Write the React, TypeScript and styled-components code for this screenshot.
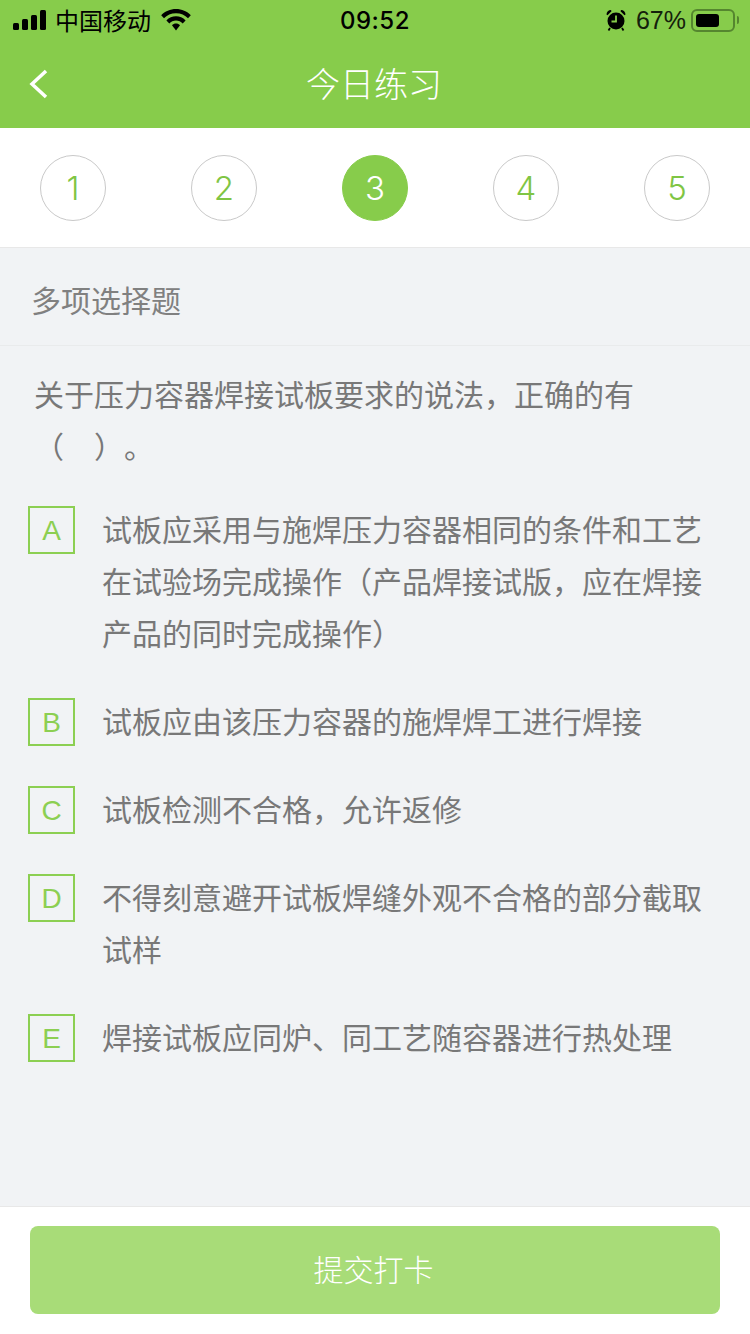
import { createGlobalStyle } from "styled-components";
import styled from "styled-components";

const GREEN = "#87cc4b";

const steps = [1, 2, 3, 4, 5];

const options = [
  {
    key: "A",
    text: "试板应采用与施焊压力容器相同的条件和工艺在试验场完成操作（产品焊接试版，应在焊接产品的同时完成操作）",
  },
  { key: "B", text: "试板应由该压力容器的施焊焊工进行焊接" },
  { key: "C", text: "试板检测不合格，允许返修" },
  { key: "D", text: "不得刻意避开试板焊缝外观不合格的部分截取试样" },
  { key: "E", text: "焊接试板应同炉、同工艺随容器进行热处理" },
];

const App: React.FunctionComponent = () => {
  return (
    <Page>
      <GlobalStyle />
      <Header>
        <StatusBar>
          <StatusLeft>
            <svg width="36" height="20" viewBox="0 0 36 20" fill="#000">
              <rect x="0" y="13" width="6" height="7" rx="1.5" />
              <rect x="9" y="9" width="6" height="11" rx="1.5" />
              <rect x="18" y="5" width="6" height="15" rx="1.5" />
              <rect x="27" y="0" width="6" height="20" rx="1.5" />
            </svg>
            <Carrier>中国移动</Carrier>
            <WifiIcon width="30" height="22" viewBox="0 0 30 22" fill="#000">
              <path d="M15 0C9.200 0 4 2.300 0.200 6.200L3 9.300C5.900 6.200 10.200 4.300 15 4.300S24.100 6.200 27 9.300L29.800 6.200C26 2.300 20.800 0 15 0Z" />
              <path d="M15 7.300C11.300 7.300 8 8.800 5.400 11.400L8.300 14.500C10 12.700 12.400 11.600 15 11.600S20 12.700 21.700 14.500L24.600 11.400C22 8.800 18.700 7.300 15 7.300Z" />
              <path d="M15 14.500C13.500 14.500 12 15.100 11 16.200L15 21.500L19 16.200C18 15.100 16.500 14.500 15 14.500Z" />
            </WifiIcon>
          </StatusLeft>
          <Clock>09:52</Clock>
          <StatusRight>
            <svg width="20" height="22" viewBox="0 0 20 22" fill="#000">
              <circle cx="10" cy="12" r="8.500" />
              <path d="M0.500 5.500C0.500 2.800 2.500 1 5 1L5.500 2.200L1.500 6.200ZM19.500 5.500C19.500 2.800 17.500 1 15 1L14.500 2.200L18.500 6.200Z" />
              <path d="M4 19L2.500 21.500M16 19L17.500 21.500" stroke="#000" strokeWidth="1.800" />
              <path d="M10 6.500V12.500H5.500" fill="none" stroke={GREEN} strokeWidth="1.800" />
            </svg>
            <Percent>67%</Percent>
            <Battery>
              <BatteryLevel />
            </Battery>
            <BatteryCap />
          </StatusRight>
        </StatusBar>
        <NavBar>
          <BackIcon width="20" height="32" viewBox="0 0 20 32">
            <path d="M17 3L3 16L17 29" fill="none" stroke="#fff" strokeWidth="3.500" />
          </BackIcon>
          <Title>今日练习</Title>
        </NavBar>
      </Header>

      <Steps>
        {steps.map((n) => (
          <Step key={n} $active={n === 3}>
            {n}
          </Step>
        ))}
      </Steps>

      <Body>
        <SectionTitle>多项选择题</SectionTitle>
        <Question>
          关于压力容器焊接试板要求的说法，正确的有
          <br />
          （　）。
        </Question>
        <OptionList>
          {options.map((o) => (
            <Option key={o.key}>
              <OptionKey>{o.key}</OptionKey>
              <OptionText>{o.text}</OptionText>
            </Option>
          ))}
        </OptionList>
      </Body>

      <Footer>
        <SubmitButton>提交打卡</SubmitButton>
      </Footer>
    </Page>
  );
};

const GlobalStyle = createGlobalStyle`
  * {
    box-sizing: border-box;
  }
  body {
    margin: 0;
    background: #fff;
    font-family: "Liberation Sans", "Noto Sans CJK SC", sans-serif;
  }
`;

const Page = styled.div`
  width: 750px;
  height: 1334px;
  display: flex;
  flex-direction: column;
  overflow: hidden;
`;

const Header = styled.header`
  height: 128px;
  background: ${GREEN};
`;

const StatusBar = styled.div`
  height: 40px;
  padding: 0 9px 0 13px;
  display: grid;
  grid-template-columns: 1fr auto 1fr;
  align-items: center;
  color: #000;
  font-size: 24px;
`;

const StatusLeft = styled.div`
  display: flex;
  align-items: center;
  gap: 6px;
`;

const WifiIcon = styled.svg`
  margin-left: 4px;
`;

const Carrier = styled.span`
  font-family: "Noto Sans CJK SC", sans-serif;
  line-height: 40px;
`;

const Clock = styled.span`
  margin-right: 4px;
  font-family: "Inter", sans-serif;
  font-weight: 500;
  letter-spacing: 0.5px;
`;

const StatusRight = styled.div`
  display: flex;
  align-items: center;
  justify-content: flex-end;
`;

const Percent = styled.span`
  margin: 0 5px 0 10px;
  font-size: 25px;
  color: #14200b;
`;

const Battery = styled.div`
  width: 44px;
  height: 23px;
  padding: 3px;
  border: 2px solid #55862f;
  border-radius: 6px;
`;

const BatteryLevel = styled.div`
  width: 67%;
  height: 100%;
  background: #000;
  border-radius: 3px;
`;

const BatteryCap = styled.div`
  width: 2px;
  height: 8px;
  margin: 0 2px;
  background: #55862f;
  border-radius: 0 2px 2px 0;
`;

const NavBar = styled.div`
  position: relative;
  height: 88px;
  display: flex;
  align-items: center;
  justify-content: center;
`;

const BackIcon = styled.svg`
  position: absolute;
  left: 29px;
  top: 28px;
`;

const Title = styled.h1`
  margin: 0 2px 0 0;
  padding-bottom: 4px;
  font-family: "Noto Sans CJK SC", sans-serif;
  font-size: 34px;
  font-weight: 300;
  color: #fff;
`;

const Steps = styled.div`
  height: 120px;
  padding: 0 40px;
  display: flex;
  align-items: center;
  justify-content: space-between;
  background: #fff;
  border-bottom: 1px solid #e8e8e8;
`;

const Step = styled.div<{ $active: boolean }>`
  width: 66px;
  height: 66px;
  display: flex;
  align-items: center;
  justify-content: center;
  border-radius: 50%;
  border: 1px solid ${(props) => (props.$active ? GREEN : "#c9c9c9")};
  background: ${(props) => (props.$active ? GREEN : "#fff")};
  color: ${(props) => (props.$active ? "#fff" : "#7fc544")};
  font-family: "Inter", sans-serif;
  font-size: 33px;
  font-weight: 350;
`;

const Body = styled.main`
  flex: 1;
  background: #f1f3f5;
`;

const SectionTitle = styled.h2`
  height: 98px;
  margin: 0;
  padding: 4px 0 0 31px;
  display: flex;
  align-items: center;
  border-bottom: 1px solid #e9ebec;
  font-family: "Noto Sans CJK SC", sans-serif;
  font-size: 30px;
  font-weight: 400;
  color: #808080;
`;

const Question = styled.p`
  margin: 0;
  padding: 21px 34px 31px;
  font-family: "Noto Sans CJK SC", sans-serif;
  font-size: 30px;
  font-weight: 400;
  line-height: 52px;
  color: #787878;
  text-spacing-trim: space-all;
`;

const OptionList = styled.ul`
  margin: 0;
  padding: 0 30px 0 28px;
  list-style: none;
  display: flex;
  flex-direction: column;
  gap: 36px;
`;

const Option = styled.li`
  display: flex;
  align-items: flex-start;
  gap: 28px;
`;

const OptionKey = styled.span`
  flex: none;
  width: 47px;
  height: 48px;
  margin-top: 4px;
  padding-top: 2px;
  display: flex;
  align-items: center;
  justify-content: center;
  border: 2px solid #8ccf52;
  color: #8ccf52;
  font-size: 28px;
`;

const OptionText = styled.span`
  margin-left: -1px;
  font-family: "Noto Sans CJK SC", sans-serif;
  font-size: 30px;
  font-weight: 400;
  line-height: 52px;
  color: #787878;
`;

const Footer = styled.footer`
  height: 128px;
  padding: 19px 30px;
  background: #fff;
  border-top: 1px solid #e8e8e8;
`;

const SubmitButton = styled.button`
  width: 100%;
  height: 88px;
  padding: 0 3px 4px 0;
  border: 0;
  border-radius: 8px;
  background: #a8dc78;
  color: #fff;
  font-family: "Noto Sans CJK SC", sans-serif;
  font-size: 30px;
  font-weight: 300;
`;

export default App;
